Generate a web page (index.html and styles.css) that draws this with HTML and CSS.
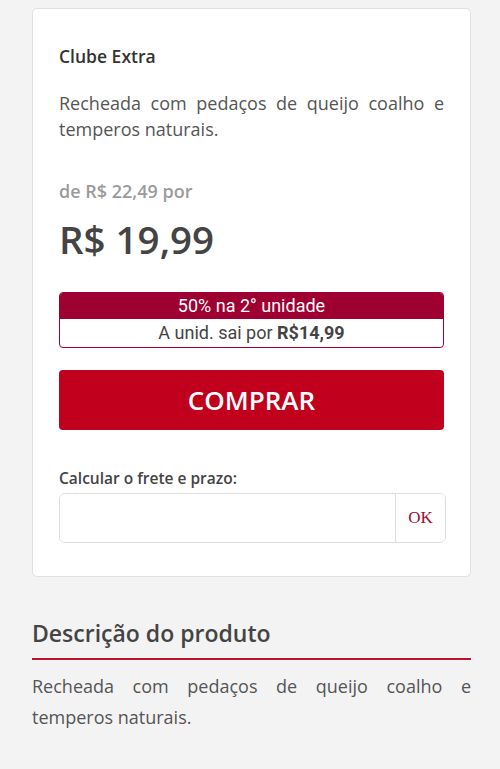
FILE: index.html
```html
<!DOCTYPE html>
<html lang="pt-BR">
<head>
  <meta charset="UTF-8" />
  <meta name="viewport" content="width=device-width, initial-scale=1.0" />
  <title>Clube Extra</title>
  <link rel="stylesheet" href="styles.css">
</head>
<body>
  <main>
    <div class="card">
      <h2 class="brand">Clube Extra</h2>
      <p class="desc">Recheada com pedaços de queijo coalho e temperos naturais.</p>

      <p class="old-price">de R$ 22,49 por</p>
      <p class="price">R$ 19,99</p>

      <div class="promo">
        <div class="promo-top">50% na 2° unidade</div>
        <div class="promo-bottom">A unid. sai por <b>R$14,99</b></div>
      </div>

      <button class="buy">COMPRAR</button>

      <label class="frete-label" for="cep">Calcular o frete e prazo:</label>
      <div class="frete">
        <input id="cep" type="text">
        <button class="ok">OK</button>
      </div>
    </div>

    <section class="info">
      <h3>Descrição do produto</h3>
      <p>Recheada com pedaços de queijo coalho e temperos naturais.</p>
    </section>
  </main>
</body>
</html>
```

FILE: styles.css
```css
body {
  margin: 0;
  font-family: "Open Sans", Arial, sans-serif;
  background-color: #f3f3f3;
  color: #444;
}

main {
  padding: 8px 29px 0 32px;
}

.card {
  background: #fff;
  border: 1px solid #e0e0e0;
  border-radius: 5px;
  padding: 32px 26px 33px 26px;
}

.brand {
  margin: 0;
  font-size: 17.5px;
  font-weight: 600;
  line-height: 30px;
  color: #333;
}

.desc {
  margin: 19px 0 0;
  font-size: 18px;
  line-height: 26px;
  color: #555;
  text-align: justify;
}

.old-price {
  margin: 36px 0 0;
  font-size: 18px;
  font-weight: 600;
  line-height: 26px;
  color: #9b9b9b;
}

.price {
  margin: 10px 0 0;
  font-size: 38.5px;
  font-weight: 600;
  line-height: 50px;
  color: #444;
}

.promo {
  margin-top: 28px;
  border: 1px solid #9e0031;
  border-radius: 4px;
  overflow: hidden;
  font-family: Roboto, Arial, sans-serif;
  font-size: 18px;
  text-align: center;
}

.promo-top {
  background: #9e0031;
  color: #fff;
  line-height: 26px;
}

.promo-bottom {
  color: #444;
  line-height: 28px;
}

.promo-bottom b {
  font-weight: 700;
}

.buy {
  display: block;
  width: 100%;
  height: 60px;
  margin-top: 22px;
  border: none;
  border-radius: 4px;
  background: #c0001c;
  color: #fff;
  font-family: "Open Sans", Arial, sans-serif;
  font-size: 26px;
  font-weight: 600;
  cursor: pointer;
}

.frete-label {
  display: block;
  margin-top: 37px;
  font-size: 15.5px;
  font-weight: 600;
  line-height: 22px;
  color: #444;
}

.frete {
  display: flex;
  margin: 4px -2px 0 0;
  height: 48px;
  border: 1px solid #ddd;
  border-radius: 6px;
  overflow: hidden;
}

.frete input {
  flex: 1;
  min-width: 0;
  border: none;
  outline: none;
  padding: 0 12px;
  font-size: 16px;
}

.ok {
  width: 50px;
  border: none;
  border-left: 1px solid #ddd;
  background: #fff;
  color: #9b1030;
  font-family: "Liberation Serif", "Times New Roman", serif;
  font-size: 17px;
  cursor: pointer;
}

.info {
  padding-top: 41px;
}

.info h3 {
  margin: 0;
  padding-bottom: 10px;
  border-bottom: 2px solid #c0122e;
  font-size: 23px;
  font-weight: 600;
  line-height: 30px;
  color: #444;
}

.info p {
  margin: 11px 0 0;
  font-size: 18px;
  line-height: 31px;
  color: #555;
  text-align: justify;
}
```
